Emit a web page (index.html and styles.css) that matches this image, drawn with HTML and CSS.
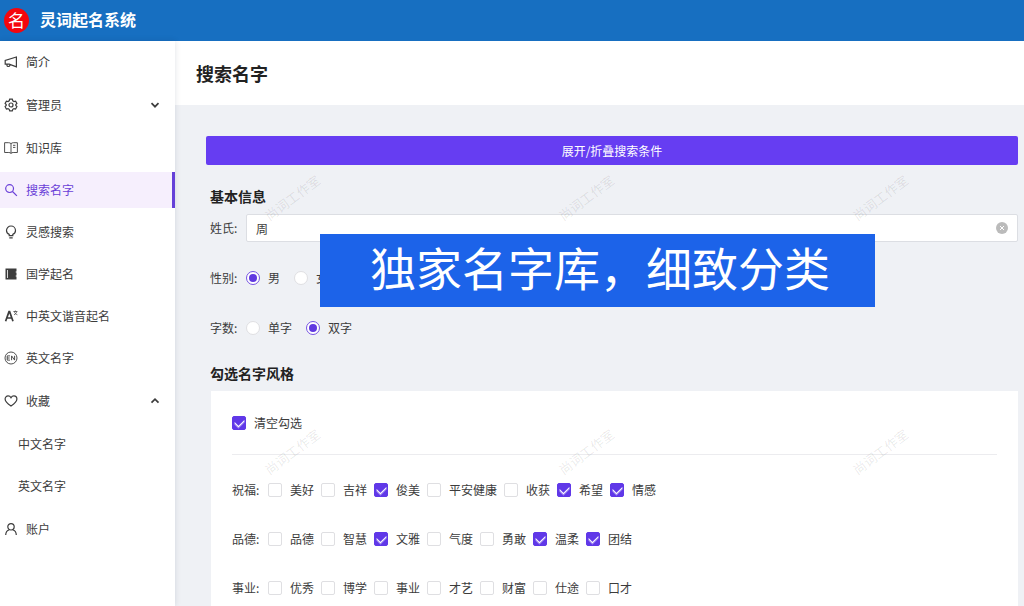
FILE: index.html
```html
<!DOCTYPE html>
<html lang="zh-CN">
<head>
<meta charset="utf-8">
<meta name="viewport" content="width=device-width, initial-scale=1">
<title>灵词起名系统</title>
<link rel="stylesheet" href="styles.css">
</head>
<body>
<header class="topbar">
  <span class="logo">名</span>
  <span class="brand">灵词起名系统</span>
</header>
<div class="shell">
  <nav class="sidebar">
    <ul class="menu">
      <li><a class="item" href="#"><svg class="icon" viewBox="0 0 14 14"><path d="M12.400 2v9.800L5.200 9.200H1.200V5.400zM3 9.200v1.600c0 .9 2.600 1 2.800-.2V9.400"/></svg>简介</a></li>
      <li class="group"><button class="item" type="button"><svg class="icon" viewBox="0 0 14 14"><path d="M5.700 1.200h2.600l.5 1.600 1.200.7 1.600-.4 1.300 2.300-1.100 1.200v.9l1.100 1.200-1.300 2.300-1.600-.4-1.200.7-.5 1.600H5.700l-.5-1.600-1.200-.7-1.600.4-1.300-2.300 1.100-1.200v-.9L1.100 5.400l1.300-2.300 1.600.4 1.200-.7z"/><circle cx="7" cy="7" r="2"/></svg>管理员<svg class="chevron" viewBox="0 0 10 10"><path d="M1.500 3.200 5 6.700l3.500-3.500"/></svg></button></li>
      <li><a class="item" href="#"><svg class="icon thin" viewBox="0 0 14 14"><path d="M7 2.600C6.300 2 5.500 1.700 4.600 1.700H.6v9.800h4.200c.9 0 1.600.2 2.200.9.600-.7 1.300-.9 2.200-.9h4.200V1.700h-4c-.9 0-1.700.3-2.400.9zM7 2.600v9.800M9 4.300h2.400M9 6.400h2.400"/></svg>知识库</a></li>
      <li><a class="item active" href="#" aria-current="page"><svg class="icon" viewBox="0 0 14 14"><circle cx="5.600" cy="5.600" r="3.900"/><path d="m8.500 8.500 4.400 4.400"/></svg>搜索名字</a></li>
      <li><a class="item" href="#"><svg class="icon" viewBox="0 0 14 14"><path d="M5.200 10.600V9.400C3.600 8.700 2.500 7.300 2.500 5.500a4.500 4.500 0 0 1 9 0c0 1.800-1.100 3.200-2.700 3.900v1.200zM5.300 12.900h3.400"/></svg>灵感搜索</a></li>
      <li><a class="item" href="#"><svg class="icon" viewBox="0 0 14 14"><path class="solid" d="M1.500 1.500h11v3h-.8v1h.8v3h-.8v1h.8v3h-11z"/><path class="cut" d="M3.500 3v8"/></svg>国学起名</a></li>
      <li><a class="item" href="#"><svg class="icon bold" viewBox="0 0 14 14"><path d="M1.600 12.200 5 2.600h.6l3.400 9.600M2.800 9h5"/><path class="fine" d="M9.400 2.500h4M11.400 1.500v1M10 5.800c1.500-.6 2.500-1.700 2.700-3.300M10.300 2.500c.4 1.600 1.300 2.700 3.100 3.300"/></svg>中英文谐音起名</a></li>
      <li><a class="item" href="#"><svg class="icon thin" viewBox="0 0 14 14"><circle cx="7" cy="7" r="6"/><path d="M6 4.900H3.200v4.200H6M3.200 7h2.500M7.600 9.200V4.900l3 4.200V4.800"/></svg>英文名字</a></li>
      <li class="group"><button class="item" type="button" aria-expanded="true"><svg class="icon" viewBox="0 0 14 14"><path d="M7 12.100C3.800 9.900 1.100 7.800 1.100 5.100c0-1.800 1.300-3.200 3-3.200 1.200 0 2.300.7 2.900 1.800.6-1.100 1.700-1.800 2.900-1.800 1.700 0 3 1.400 3 3.200 0 2.700-2.700 4.800-5.900 7z"/></svg>收藏<svg class="chevron" viewBox="0 0 10 10"><path d="M1.500 6.700 5 3.200l3.500 3.500"/></svg></button>
        <ul class="menu submenu">
          <li><a class="item" href="#">中文名字</a></li>
          <li><a class="item" href="#">英文名字</a></li>
        </ul>
      </li>
      <li><a class="item" href="#"><svg class="icon" viewBox="0 0 14 14"><circle cx="7" cy="4.800" r="3.200"/><path d="M1.700 13c.1-2.800 1.600-4.600 3.600-5.200M12.300 13c-.1-2.800-1.600-4.600-3.600-5.200"/></svg>账户</a></li>
    </ul>
  </nav>
  <main class="main">
    <div class="page-head"><h1>搜索名字</h1></div>
    <form class="content">
      <button class="toggle" type="button">展开/折叠搜索条件</button>
      <section class="section">
        <h2>基本信息</h2>
        <div class="rows">
          <div class="row">
            <label class="name" for="surname">姓氏:</label>
            <div class="field">
              <input class="text" id="surname" type="text" value="周">
              <button class="clear" type="button" aria-label="清除"><svg viewBox="0 0 12 12"><circle cx="6" cy="6" r="6"/><path d="m4 4 4 4M8 4 4 8"/></svg></button>
            </div>
          </div>
          <div class="row" role="radiogroup" aria-label="性别">
            <span class="name">性别:</span>
            <div class="radios">
              <label class="option"><input type="radio" name="sex" checked>男</label>
              <label class="option"><input type="radio" name="sex">女</label>
            </div>
          </div>
          <div class="row" role="radiogroup" aria-label="字数">
            <span class="name">字数:</span>
            <div class="radios">
              <label class="option"><input type="radio" name="count">单字</label>
              <label class="option"><input type="radio" name="count" checked>双字</label>
            </div>
          </div>
        </div>
      </section>
      <section class="section">
        <h2>勾选名字风格</h2>
        <div class="card">
          <div class="all"><div class="row"><label class="option"><input type="checkbox" checked>清空勾选</label></div></div>
          <div class="row checks">
            <span class="name">祝福:</span>
            <label class="option"><input type="checkbox">美好</label>
            <label class="option"><input type="checkbox">吉祥</label>
            <label class="option"><input type="checkbox" checked>俊美</label>
            <label class="option"><input type="checkbox">平安健康</label>
            <label class="option"><input type="checkbox">收获</label>
            <label class="option"><input type="checkbox" checked>希望</label>
            <label class="option"><input type="checkbox" checked>情感</label>
          </div>
          <div class="row checks">
            <span class="name">品德:</span>
            <label class="option"><input type="checkbox">品德</label>
            <label class="option"><input type="checkbox">智慧</label>
            <label class="option"><input type="checkbox" checked>文雅</label>
            <label class="option"><input type="checkbox">气度</label>
            <label class="option"><input type="checkbox">勇敢</label>
            <label class="option"><input type="checkbox" checked>温柔</label>
            <label class="option"><input type="checkbox" checked>团结</label>
          </div>
          <div class="row checks">
            <span class="name">事业:</span>
            <label class="option"><input type="checkbox">优秀</label>
            <label class="option"><input type="checkbox">博学</label>
            <label class="option"><input type="checkbox">事业</label>
            <label class="option"><input type="checkbox">才艺</label>
            <label class="option"><input type="checkbox">财富</label>
            <label class="option"><input type="checkbox">仕途</label>
            <label class="option"><input type="checkbox">口才</label>
          </div>
        </div>
      </section>
    </form>
    <div class="watermarks" aria-hidden="true">
      <span>尚词工作室</span><span>尚词工作室</span><span>尚词工作室</span>
      <span>尚词工作室</span><span>尚词工作室</span><span>尚词工作室</span>
    </div>
  </main>
</div>
<div class="banner">独家名字库，细致分类</div>
</body>
</html>
```
FILE: styles.css
```css
* { box-sizing: border-box; }

body {
  margin: 0;
  height: 100vh;
  display: flex;
  flex-direction: column;
  overflow: hidden;
  font: 12px/20px "Noto Sans CJK SC", sans-serif;
  color: #3c3c3c;
  background: #eff1f5;
}

h1, h2 { margin: 0; font-weight: 700; color: #222; }
h1 { font-size: 18px; line-height: 24px; }
h2 { font-size: 14px; line-height: 22px; padding: 0 0 2px 4px; }

button { font: inherit; color: inherit; border: 0; background: none; cursor: pointer; }

.topbar {
  flex: none;
  display: flex;
  align-items: center;
  gap: 11px;
  height: 41px;
  padding: 0 4px;
  background: #176fc1;
  color: #fff;
}
.logo {
  width: 25px;
  height: 25px;
  border-radius: 50%;
  background: #f5060d;
  font-size: 17px;
  line-height: 23px;
  text-align: center;
}
.brand { padding-bottom: 3px; font-size: 16px; font-weight: 700; }

.shell { flex: 1; display: flex; min-height: 0; }

.sidebar {
  flex: none;
  width: 175px;
  padding-top: 3px;
  background: #fff;
  box-shadow: 0 0 6px #001c3820;
  overflow: hidden;
  z-index: 1;
}
.menu {
  display: flex;
  flex-direction: column;
  gap: 6px;
  margin: 0;
  padding: 0;
  list-style: none;
}
.group { margin: 1px 0; }
.submenu { padding: 7px 0 0 14px; }
.item {
  display: flex;
  align-items: center;
  gap: 8px;
  width: 100%;
  height: 36px;
  padding: 0 15px 0 4px;
  color: inherit;
  text-align: left;
  text-decoration: none;
}
.active {
  color: #6a3fd8;
  background: #f6effd;
  border-right: 3px solid #6440d8;
}
.icon, .chevron {
  flex: none;
  fill: none;
  stroke: currentColor;
  stroke-width: 1.2;
}
.icon { width: 14px; height: 14px; }
.chevron { width: 10px; height: 10px; margin-left: auto; stroke-width: 1.7; }
.thin { stroke-width: 0.9; }
.bold { stroke-width: 1.7; }
.fine { stroke-width: 0.7; }
.solid { fill: currentColor; stroke: none; }
.cut { stroke: #fff; stroke-width: 0.8; }

.main { position: relative; flex: 1; min-width: 0; overflow: hidden; }
.page-head { padding: 20px 21px; background: #fff; }
.content { padding: 31px 6px 24px 31px; }
.toggle {
  display: block;
  width: 100%;
  height: 29px;
  border-radius: 2px;
  background: #663df2;
  color: #fff;
}
.section { padding-top: 20px; }
.rows { display: grid; gap: 22px; padding: 5px 0 0 4px; }
.row { display: flex; align-items: center; min-height: 28px; }
.name { flex: none; width: 36px; }
.field { position: relative; flex: 1; }
.text {
  display: block;
  width: 100%;
  height: 28px;
  padding: 0 28px 0 9px;
  border: 1px solid #dcdee3;
  border-radius: 2px;
  background: #fff;
  font: inherit;
  color: inherit;
}
.clear {
  position: absolute;
  top: 8px;
  right: 10px;
  width: 12px;
  height: 12px;
  padding: 0;
}
.clear svg { display: block; fill: #bbb; stroke: #fff; }
.clear circle { stroke: none; }

.radios { display: flex; gap: 14px; }
.option { display: flex; align-items: center; gap: 8px; }
.option input {
  appearance: none;
  flex: none;
  display: grid;
  place-items: center;
  width: 14px;
  height: 14px;
  margin: 0;
  border: 1px solid #dfdfe2;
  border-radius: 2px;
  background: #fff;
}
.option input[type="radio"] { border-radius: 50%; }
.option input[type="radio"]:checked { border-color: #7653e3; }
.option input[type="radio"]:checked::after {
  content: "";
  width: 8px;
  height: 8px;
  border-radius: 50%;
  background: #6038e0;
}
.option input[type="checkbox"]:checked { background: #6038e8; border-color: #6038e8; }
.option input[type="checkbox"]:checked::after {
  content: "";
  width: 8px;
  height: 5px;
  margin-bottom: 2px;
  border: solid #fff;
  border-width: 0 0 1px 1px;
  box-shadow: -1px 1px 0 -0px #ffffff60;
  transform: rotate(-45deg);
}

.card {
  display: grid;
  gap: 21px;
  margin: 5px 0 0 5px;
  padding: 18px 21px 24px;
  background: #fff;
}
.all { padding-bottom: 17px; border-bottom: 1px solid #ececef; }
.checks { gap: 7px; }
.checks .name { width: 29px; }

.watermarks {
  position: absolute;
  top: 30px;
  left: -29px;
  display: grid;
  grid-template-columns: repeat(3, 294px);
  grid-auto-rows: 254px;
  place-items: center;
  font-size: 13px;
  color: #00000018;
  pointer-events: none;
}
.watermarks span { transform: rotate(-37deg); }

.banner {
  position: absolute;
  top: 234px;
  left: 320px;
  z-index: 2;
  padding: 0 45px 8px 50px;
  background: #1c63e9;
  color: #fff;
  font-size: 46px;
  line-height: 65px;
  white-space: nowrap;
}
```
